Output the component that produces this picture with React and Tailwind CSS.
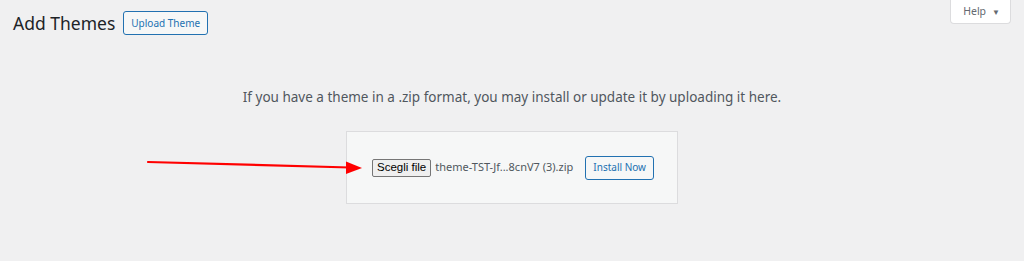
import React from 'react';

// Red annotation arrow pointing at the file picker
const Arrow = () => (
  <svg className="absolute left-[140px] top-[152px]" width="230" height="30" viewBox="0 0 230 30">
    <line x1="8" y1="10" x2="210" y2="15.5" stroke="#ff0000" strokeWidth="2.2" strokeLinecap="round" />
    <polygon points="206,9.5 222,16 206,22" fill="#ff0000" />
  </svg>
);

export default function App() {
  return (
    <div className="relative min-h-[261px] bg-[#f0f0f1] text-[#1d2327] font-['Noto_Sans',sans-serif]">
      {/* Header */}
      <div className="flex items-start justify-between">
        <div className="flex items-center gap-[8px] pl-[13px] pt-[11px]">
          <h1 className="text-[17.5px] leading-[24px] font-normal text-[#1d2327] whitespace-nowrap">Add Themes</h1>
          <button className="h-[24px] px-[7px] rounded-[3px] border border-[#2271b1] bg-[#f6f7f7] text-[10px] text-[#2271b1] whitespace-nowrap">
            Upload Theme
          </button>
        </div>
        <button className="mr-[13px] h-[24px] pl-[12px] pr-[10px] flex items-center gap-[6px] bg-white border border-t-0 border-[#dcdcde] rounded-b-[4px] text-[10.5px] text-[#646970]">
          Help
          <span className="text-[8px] text-[#646970]">▼</span>
        </button>
      </div>

      {/* Upload panel */}
      <div className="flex flex-col items-center pt-[52px]">
        <p className="text-[13.5px] leading-[20px] text-[#50575e] whitespace-nowrap">
          If you have a theme in a .zip format, you may install or update it by uploading it here.
        </p>
        <div className="mt-[24px] w-[332px] h-[73px] bg-[#f6f7f7] border border-[#dcdcde] flex items-center pl-[25px]">
          <div className="flex items-center shrink-0">
            <span className="h-[18px] px-[4px] flex items-center rounded-[2px] border border-[#767676] bg-[#efefef] text-[11.5px] text-black font-['Liberation_Sans',sans-serif] whitespace-nowrap">
              Scegli file
            </span>
            <span className="ml-[4px] text-[11px] text-[#50575e] whitespace-nowrap">theme-TST-Jf...8cnV7 (3).zip</span>
          </div>
          <button className="ml-[12px] shrink-0 h-[24px] px-[7px] rounded-[3px] border border-[#2271b1] bg-[#f6f7f7] text-[10px] text-[#2271b1] whitespace-nowrap">
            Install Now
          </button>
        </div>
      </div>

      <Arrow />
    </div>
  );
}
